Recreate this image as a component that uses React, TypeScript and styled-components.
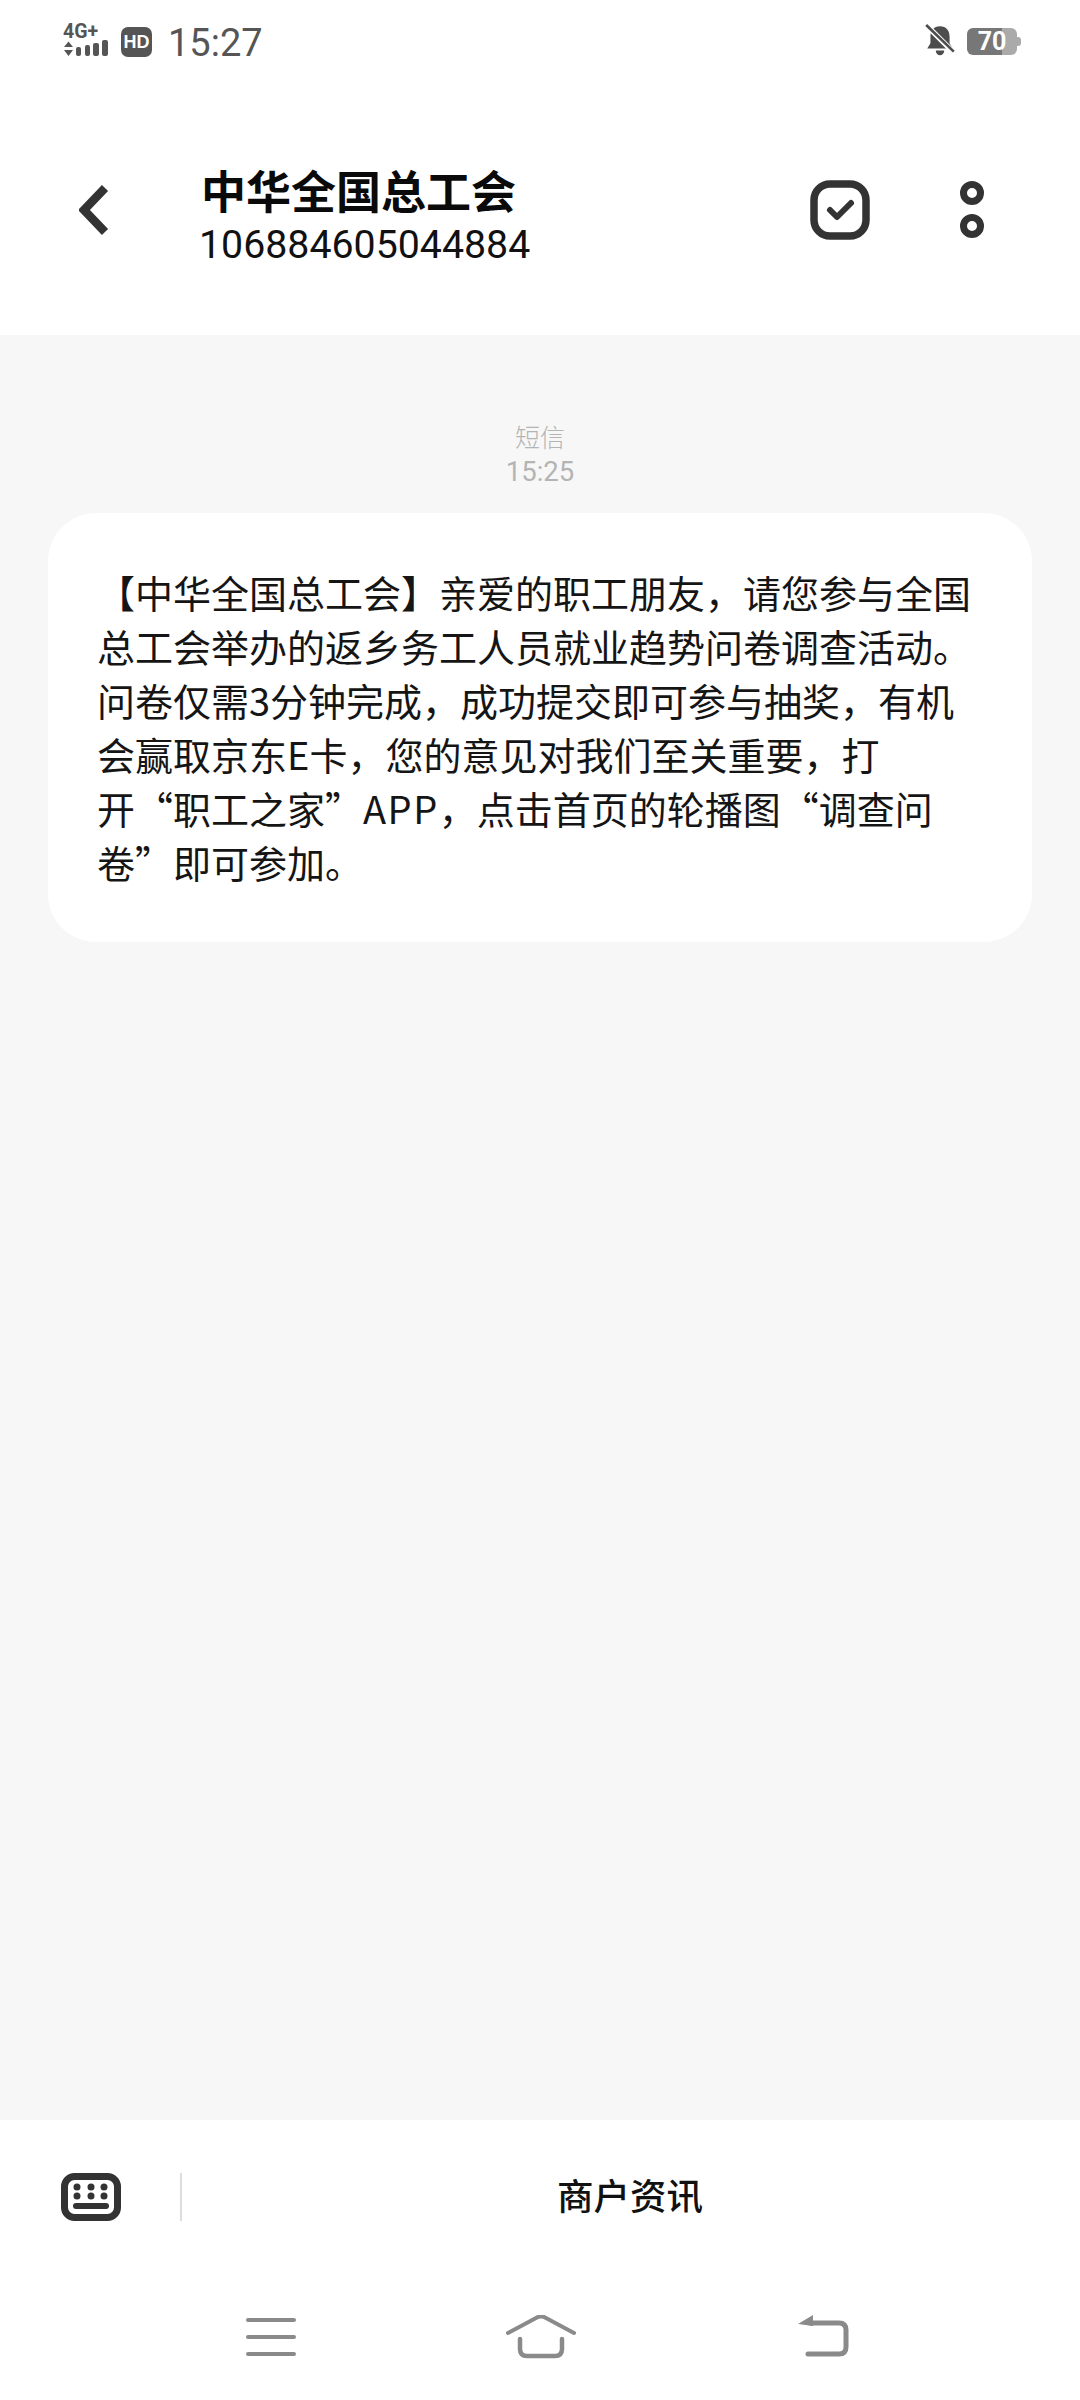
import React from "react";
import styled, { createGlobalStyle } from "styled-components";

const Global = createGlobalStyle`
  html, body { margin: 0; padding: 0; background: #fff; }
  * { box-sizing: border-box; }
`;

const cjk = `"Noto Sans CJK SC", Roboto, sans-serif`;

const Page = styled.div`
  width: 1080px;
  height: 2400px;
  display: flex;
  flex-direction: column;
  overflow: hidden;
  background: #fff;
  font-family: ${cjk};
`;

const StatusBar = styled.div`
  height: 85px;
  flex: none;
  display: flex;
  align-items: flex-start;
  padding: 24px 63px 0 63px;
  color: #555;
`;

const NetworkBlock = styled.div`
  display: flex;
  flex-direction: column;
  width: 48px;
  margin-right: 10px;
`;

const NetworkLabel = styled.span`
  font: 700 19.500px/16px Roboto, sans-serif;
  color: #555;
`;

const HdBadge = styled.span`
  width: 31px;
  height: 30px;
  margin-top: 3px;
  margin-right: 16px;
  border-radius: 7px;
  background: #555;
  color: #fff;
  display: flex;
  align-items: center;
  justify-content: center;
  font: 800 18px/1 "Liberation Sans", sans-serif;
`;

const Clock = styled.span`
  font: 400 38px/38px Roboto, sans-serif;
  color: #555;
`;

const StatusRight = styled.div`
  margin-left: auto;
  display: flex;
  align-items: flex-start;
  gap: 12px;
`;

const Battery = styled.div`
  position: relative;
  width: 50px;
  height: 27px;
  margin-top: 4px;
  border-radius: 6px;
  background: linear-gradient(90deg, #777 0 70%, #aaa 70% 100%);
  color: #fff;
  display: flex;
  align-items: center;
  justify-content: center;
  font: 700 25px/1 Roboto, sans-serif;
  &::after {
    content: "";
    position: absolute;
    right: -4px;
    top: 9px;
    width: 4px;
    height: 9px;
    border-radius: 0 3px 3px 0;
    background: #aaa;
  }
`;

const Header = styled.header`
  height: 250px;
  flex: none;
  display: flex;
  align-items: center;
  padding: 0 96px 0 79px;
`;

const BackIcon = styled.svg`
  width: 30px;
  height: 50px;
  flex: none;
`;

const TitleBlock = styled.div`
  margin-left: 90px;
  display: flex;
  flex-direction: column;
  padding-top: 6px;
`;

const Title = styled.h1`
  margin: 0 0 0 2px;
  font: 700 45px/62px ${cjk};
  color: #0a0a0a;
`;

const Subtitle = styled.div`
  margin-top: 2px;
  font: 400 39.300px/44px Roboto, sans-serif;
  color: #111;
`;

const HeaderActions = styled.div`
  margin-left: auto;
  display: flex;
  align-items: center;
`;

const CheckIcon = styled.svg`
  width: 60px;
  height: 60px;
  margin-right: 90px;
`;

const MoreIcon = styled.svg`
  width: 24px;
  height: 58px;
`;

const Thread = styled.main`
  flex: 1;
  background: #f7f7f7;
  padding: 84px 48px 0;
  display: flex;
  flex-direction: column;
`;

const Meta = styled.div`
  text-align: center;
  font-size: 25px;
  line-height: 35px;
  color: #b4b4b4;
  font-weight: 300;
`;

const MetaTime = styled.div`
  font: 400 27.500px/35px Roboto, sans-serif;
`;

const Bubble = styled.section`
  margin-top: 24px;
  height: 429px;
  background: #fff;
  border-radius: 48px;
  padding: 52px 0 0 49px;
  font-size: 38px;
  line-height: 54px;
  color: #151515;
`;

const BubbleLine = styled.div`
  white-space: nowrap;
`;

const LatinRun = styled.span`
  letter-spacing: 1.500px;
`;

const ActionBar = styled.div`
  height: 154px;
  flex: none;
  display: flex;
  align-items: center;
  padding-left: 61px;
`;

const KeyboardIcon = styled.svg`
  width: 60px;
  height: 48px;
  flex: none;
`;

const Divider = styled.div`
  width: 2px;
  height: 48px;
  margin-left: 59px;
  background: #ddd;
`;

const ActionLabel = styled.div`
  flex: 1;
  text-align: center;
  padding: 0 2px 6px 0;
  font-size: 36.500px;
  font-weight: 500;
  color: #111;
`;

const NavBar = styled.nav`
  height: 126px;
  flex: none;
  display: flex;
  align-items: flex-start;
  padding: 41px 0 0 246px;
`;

const NavIcon = styled.svg<{ $gap?: number }>`
  flex: none;
  margin-right: ${(p) => p.$gap ?? 0}px;
`;

export default function App() {
  return (
    <Page>
      <Global />
      <StatusBar>
        <NetworkBlock>
          <NetworkLabel>4G+</NetworkLabel>
          <svg width="48" height="18" viewBox="0 0 48 18" fill="#555">
            <path d="M1 7 5.500 1.500 10 7ZM1 10 10 10 5.500 16Z" />
            <rect x="13" y="7" width="5" height="9" rx="2" />
            <rect x="22" y="5" width="5" height="11" rx="2" />
            <rect x="30" y="3" width="6" height="13" rx="2" />
            <rect x="39" y="0" width="6" height="16" rx="2" />
          </svg>
        </NetworkBlock>
        <HdBadge>HD</HdBadge>
        <Clock>15:27</Clock>
        <StatusRight>
          <svg width="30" height="34" viewBox="0 0 28 32">
            <path
              d="M14 2c6 0 9 4 9 10v6l3 5H2l3-5v-6C5 6 8 2 14 2ZM10 25h8c0 6-8 6-8 0Z"
              fill="#4d4d4d"
            />
            <path d="M2 2 27 27" stroke="#fff" strokeWidth="5" />
            <path d="M1 1 27 26" stroke="#4d4d4d" strokeWidth="2.500" />
          </svg>
          <Battery>70</Battery>
        </StatusRight>
      </StatusBar>

      <Header>
        <BackIcon viewBox="0 0 30 50">
          <path d="M26 3 5 25 26 47" fill="none" stroke="#333" strokeWidth="8.500" />
        </BackIcon>
        <TitleBlock>
          <Title>中华全国总工会</Title>
          <Subtitle>106884605044884</Subtitle>
        </TitleBlock>
        <HeaderActions>
          <CheckIcon viewBox="0 0 60 60">
            <rect x="4" y="4" width="52" height="52" rx="16" fill="none" stroke="#333" strokeWidth="7.500" />
            <path d="M20 30 27 37 41 23" fill="none" stroke="#333" strokeWidth="6" strokeLinecap="round" strokeLinejoin="round" />
          </CheckIcon>
          <MoreIcon viewBox="0 0 24 58">
            <circle cx="12" cy="12" r="8.500" fill="none" stroke="#333" strokeWidth="7" />
            <circle cx="12" cy="45" r="8.500" fill="none" stroke="#333" strokeWidth="7" />
          </MoreIcon>
        </HeaderActions>
      </Header>

      <Thread>
        <Meta>
          短信
          <MetaTime>15:25</MetaTime>
        </Meta>
        <Bubble>
          <BubbleLine>【中华全国总工会】亲爱的职工朋友，请您参与全国</BubbleLine>
          <BubbleLine>总工会举办的返乡务工人员就业趋势问卷调查活动。</BubbleLine>
          <BubbleLine>问卷仅需3分钟完成，成功提交即可参与抽奖，有机</BubbleLine>
          <BubbleLine>会赢取京东E卡，您的意见对我们至关重要，打</BubbleLine>
          <BubbleLine>
            开“职工之家”<LatinRun>APP</LatinRun>，点击首页的轮播图“调查问
          </BubbleLine>
          <BubbleLine>卷”即可参加。</BubbleLine>
        </Bubble>
      </Thread>

      <ActionBar>
        <KeyboardIcon viewBox="0 0 60 48">
          <rect x="3.500" y="3.500" width="53" height="41" rx="10" fill="none" stroke="#333" strokeWidth="7" />
          <g fill="#333">
            <circle cx="16" cy="14" r="3.500" />
            <circle cx="30" cy="14" r="3.500" />
            <circle cx="43" cy="14" r="3.500" />
            <circle cx="16" cy="23" r="3.500" />
            <circle cx="30" cy="23" r="3.500" />
            <circle cx="43" cy="23" r="3.500" />
            <rect x="12" y="30" width="36" height="6" rx="3" />
          </g>
        </KeyboardIcon>
        <Divider />
        <ActionLabel>商户资讯</ActionLabel>
      </ActionBar>

      <NavBar>
        <NavIcon $gap={210} width="50" height="44" viewBox="0 0 50 44">
          <path d="M2 5H48M2 22H48M2 39H48" stroke="#8a8a8a" strokeWidth="4" strokeLinecap="round" />
        </NavIcon>
        <NavIcon $gap={222} width="70" height="44" viewBox="0 0 70 44">
          <path d="M2 18 30 3Q35 0 40 3L68 18" fill="none" stroke="#8a8a8a" strokeWidth="4" strokeLinecap="round" />
          <path d="M14 24V34Q14 41 21 41H49Q56 41 56 34V24" fill="none" stroke="#8a8a8a" strokeWidth="4.500" strokeLinecap="round" />
        </NavIcon>
        <NavIcon width="52" height="44" viewBox="0 0 52 44">
          <path d="M12 8H41Q48 8 48 15V32Q48 39 41 39H10" fill="none" stroke="#8a8a8a" strokeWidth="5" strokeLinecap="round" />
          <path d="M0 9 15 0V11Z" fill="#8a8a8a" />
        </NavIcon>
      </NavBar>
    </Page>
  );
}
